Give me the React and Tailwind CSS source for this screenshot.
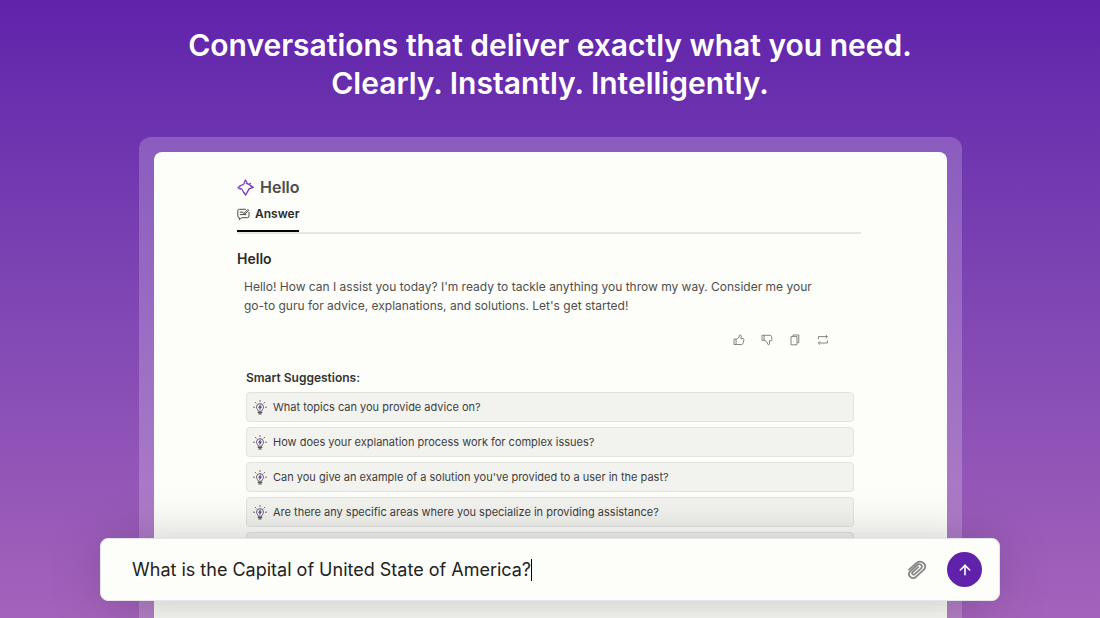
import React, { useState } from 'react';
import { ArrowUp } from 'lucide-react';

const suggestions = [
  'What topics can you provide advice on?',
  'How does your explanation process work for complex issues?',
  "Can you give an example of a solution you've provided to a user in the past?",
  'Are there any specific areas where you specialize in providing assistance?',
  'What kind of questions do you answer best?',
];

const SparkIcon = () => (
  <svg width="17" height="17" viewBox="0 0 18 18" fill="none" stroke="#8a4cc4" strokeWidth="1.4" strokeLinecap="round" strokeLinejoin="round" aria-hidden="true">
    <path d="M10.6 3.6 8.8 1 7.2 5.4 3.4 7.2" />
    <path d="M3.6 10.8 1 9.2l2.4-2M1 9.2l4.2 1.6 2 3.6" />
    <path d="M14.4 7.2 17 8.8l-4.2 1.6-2 3.6M7.4 14.4 9.2 17l1.6-3" stroke="#6f35b5" />
    <path d="m9.8 4.6 3 1.2L17 8.8M12.8 5.8l1.4-1.2" stroke="#7a3fbd" />
  </svg>
);

const AnswerIcon = () => (
  <svg width="13" height="13" viewBox="0 0 13 13" fill="none" stroke="#4a4a4a" strokeWidth="1" strokeLinecap="round" strokeLinejoin="round" aria-hidden="true">
    <path d="M8.6 1.3H2.4A1.6 1.6 0 0 0 .8 2.9v5.2a1.6 1.6 0 0 0 1.6 1.6v2.1l2.3-2.1h5.7A1.6 1.6 0 0 0 12 8.1V4.4" />
    <path d="M3.2 4.2h3M3.2 6.6h5.6M6.9 5.6 10.7 1.5l1.1.9-3.6 3.5-1.3.2z" />
  </svg>
);

const BulbIcon = () => (
  <svg width="14" height="15" viewBox="0 0 14 15" fill="none" stroke="#555" strokeWidth="0.9" strokeLinecap="round" aria-hidden="true">
    <path d="M5.2 10.8c0-1.2-1.7-1.7-1.7-3.7a3.5 3.5 0 0 1 7 0c0 2-1.7 2.5-1.7 3.7z" />
    <path d="M5.2 12.4h3.6M5.9 13.9h2.2" strokeWidth="1.2" />
    <path d="M7 .5v1M.5 7.2h1M12.5 7.2h1M2.2 2.3l.8.8M11.8 2.3l-.8.8" />
    <path d="M7.4 4.8 5.5 7.6h1.3l-.2 2.1 2-2.9H7.2z" fill="#6022ab" stroke="#6022ab" strokeWidth="0.4" />
  </svg>
);

const actions = [
  {
    label: 'Like',
    paths: ['M1 5.2h2.1v5.3H1z', 'M3.1 5.4 5.4 4 6.9 1c1-.1 1.6.6 1.3 1.6l-.5 1.9h2.2c.8 0 1.2.6 1 1.3l-1 3.7c-.2.7-.6 1-1.3 1H3.1'],
  },
  {
    label: 'Dislike',
    paths: ['M1 1.3h2.1v5H1z', 'M3.1 1.3h6c.7 0 1.1.3 1.3 1l.6 3.2c.1.7-.3 1.2-1 1.2H8.5v2.8c0 .8-.4 1.3-1.1 1.4L5.2 7.4 3.1 6.3'],
  },
  {
    label: 'Copy',
    paths: ['M4 2.4V1h5.8v7.6H8.2', 'M2 2.6h6v8.2H2z'],
  },
  {
    label: 'Regenerate',
    paths: ['M1.4 5V2.6h8.8M8.7.9l1.8 1.7-1.8 1.7', 'M10.4 6.4V9H1.6M3.1 7.3 1.4 9l1.7 1.7'],
  },
];

const Clip = () => (
  <svg width="20" height="20" viewBox="0 0 20 20" fill="none" stroke="#858585" strokeWidth="1.8" strokeLinecap="round" strokeLinejoin="round" aria-hidden="true">
    <path d="M2 9.6 9 3.4c5-4.7 12.5 1.6 7.6 6.5l-7.4 6.8c-4.2 3.6-9.6-1.4-6-5.4l7-6.3c3-2.4 6.3 1 3.7 3.7l-6.2 5.5c-1.7 1.3-3.5-.6-2.1-2.1l5.6-5" />
  </svg>
);

const App = () => {
  const [question, setQuestion] = useState('What is the Capital of United State of America?');

  return (
    <main className="relative flex h-screen flex-col overflow-hidden bg-linear-to-b from-[#6022ab] to-[#a463bb] font-[Inter,sans-serif]">
      <h1 className="pt-[26px] text-center text-[30px] leading-[38px] font-semibold text-white">
        Conversations that deliver exactly what you need.
        <br />
        Clearly. Instantly. Intelligently.
      </h1>

      <div className="mr-[138px] ml-[139px] mt-[35px] flex flex-1 flex-col rounded-t-xl bg-white/20 px-[15px] pt-[15px]">
        <section className="flex-1 rounded-t-lg bg-[#fdfdf9] pt-[25px] pr-[86px] pl-[83px]">
          <div className="flex items-center gap-1.5">
            <SparkIcon />
            <h2 className="text-base leading-5 font-semibold text-[#4d4d4d]">Hello</h2>
          </div>

          <div className="mt-[5px] flex border-b-2 border-[#e6e6e2]">
            <button className="flex items-center gap-[5px] border-b-2 border-black pt-0.5 pb-1.5 text-xs leading-5 font-semibold text-[#2b2b2b]">
              <AnswerIcon />
              Answer
            </button>
          </div>

          <h3 className="mt-[15px] text-sm leading-5 font-semibold text-[#2b2b2b]">Hello</h3>
          <p className="mt-2 pr-6 pl-[7px] text-xs leading-[19px] text-[#4f4f4f]">
            Hello! How can I assist you today? I'm ready to tackle anything you throw my way. Consider me your
            <br />
            go-to guru for advice, explanations, and solutions. Let's get started!
          </p>

          <div className="mt-[15px] flex justify-end gap-4 pr-8">
            {actions.map((action) => (
              <button key={action.label} aria-label={action.label} className="flex h-5 w-3 items-center justify-center">
                <svg width="12" height="12" viewBox="0 0 12 12" fill="none" stroke="#777" strokeWidth="0.9" strokeLinejoin="round">
                  {action.paths.map((d) => (
                    <path key={d} d={d} />
                  ))}
                </svg>
              </button>
            ))}
          </div>

          <div className="mt-[18px] pr-[7px] pl-[9px]">
            <h4 className="text-xs leading-5 font-semibold text-[#333]">Smart Suggestions:</h4>
            <ul className="mt-1 flex flex-col gap-[5px]">
              {suggestions.map((text) => (
                <li key={text}>
                  <button className="flex h-[30px] w-full items-center gap-1.5 rounded border border-[#e2e3df] bg-[#f2f3ef] px-1.5 text-left text-[11px] text-[#3d3d3d]">
                    <BulbIcon />
                    {text}
                  </button>
                </li>
              ))}
            </ul>
          </div>
        </section>
      </div>

      {/* prompt bar floats over the answer card */}
      <form
        onSubmit={(e) => e.preventDefault()}
        className="absolute inset-x-[100px] bottom-[17px] flex h-[63px] items-center rounded-lg border border-[#e5e5ec] bg-[#fdfdf9] pr-[17px] pl-[31px] shadow-[0_4px_60px_-12px_rgba(0,0,0,0.38)]"
      >
        <div className="flex flex-1 items-center">
          <input
            aria-label="Ask a question"
            value={question}
            onChange={(e) => setQuestion(e.target.value)}
            className="field-sizing-content bg-transparent text-lg text-[#222] caret-transparent outline-none"
          />
          <span className="h-[22px] w-px bg-black" />
        </div>
        <button type="button" aria-label="Attach file" className="mr-5">
          <Clip />
        </button>
        <button type="submit" aria-label="Send" className="flex size-[35px] items-center justify-center rounded-full bg-[#6022ab] text-white">
          <ArrowUp size={16} strokeWidth={2.4} />
        </button>
      </form>
    </main>
  );
};

export default App;
